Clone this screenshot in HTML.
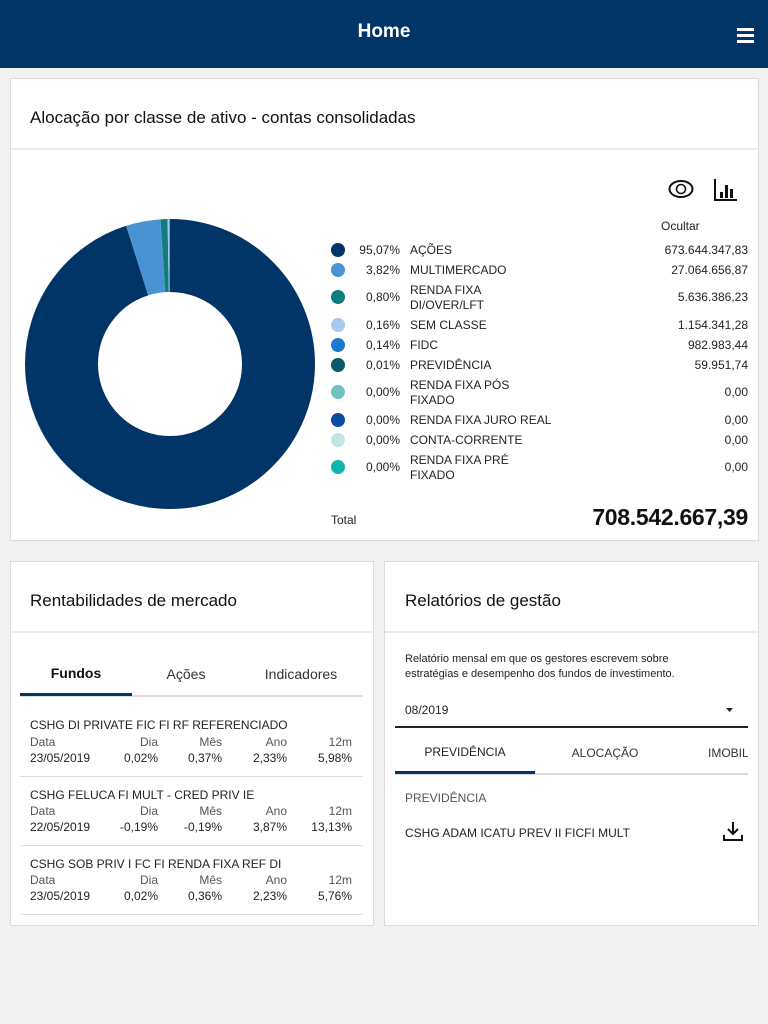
<!DOCTYPE html>
<html><head><meta charset="utf-8"><style>
*{margin:0;padding:0;box-sizing:border-box}
body{width:768px;height:1024px;background:#f1f1f1;font-family:"Liberation Sans",Arial,sans-serif;color:#222;position:relative;overflow:hidden}
.a{position:absolute;white-space:nowrap}
.hdr{left:0;top:0;width:768px;height:68px;background:#023567}
.card{position:absolute;background:#fff;border:1px solid #dcdcdc}
.t{font-size:17px;color:#111}
.sm{font-size:12px;color:#222}
.r{text-align:right}
.dot{position:absolute;width:14px;height:14px;border-radius:50%}
.g{color:#555}
</style></head><body>
<div class="a hdr"></div>
<div class="a" style="left:0;width:768px;top:21px;text-align:center;color:#fff;font-size:19px;font-weight:bold">Home</div>
<div class="a" style="left:737px;top:28px;width:17px;height:3px;background:#fff"></div>
<div class="a" style="left:737px;top:34px;width:17px;height:3px;background:#fff"></div>
<div class="a" style="left:737px;top:40px;width:17px;height:3px;background:#fff"></div>

<div class="card" style="left:10px;top:78px;width:749px;height:463px"></div>
<div class="a t" style="left:30px;top:108px">Alocação por classe de ativo - contas consolidadas</div>
<div class="a" style="left:11px;top:148px;width:747px;height:2px;background:#ececec"></div>

<svg class="a" style="left:0;top:0" width="768" height="560">
<g transform="rotate(-90 170 364)" fill="none" stroke-width="73">
<circle cx="170" cy="364" r="108.5" stroke="#023567" stroke-dasharray="648.1 681.7"/>
<circle cx="170" cy="364" r="108.5" stroke="#4a93d2" stroke-dasharray="0 648.1 26 10"/>
<circle cx="170" cy="364" r="108.5" stroke="#0d7d7d" stroke-dasharray="0 674.2 5.4 10"/>
<circle cx="170" cy="364" r="108.5" stroke="#a9c8ec" stroke-dasharray="0 679.6 1.2 10"/>
<circle cx="170" cy="364" r="108.5" stroke="#1d78cf" stroke-dasharray="0 680.8 0.9 10"/>
</g>
<ellipse cx="681" cy="189" rx="11.5" ry="8" fill="none" stroke="#111" stroke-width="2"/>
<circle cx="681" cy="189" r="4.5" fill="none" stroke="#111" stroke-width="1.6"/>
<path d="M715 179V200H737" fill="none" stroke="#111" stroke-width="2"/>
<rect x="720" y="192" width="3" height="6" fill="#111"/>
<rect x="725" y="185" width="3" height="13" fill="#111"/>
<rect x="730" y="189" width="3" height="9" fill="#111"/>
</svg>

<div class="a sm" style="left:661px;top:219px">Ocultar</div>

<div class="dot" style="left:331px;top:243px;background:#023567"></div>
<div class="dot" style="left:331px;top:263px;background:#4a93d2"></div>
<div class="dot" style="left:331px;top:290px;background:#0d7d7d"></div>
<div class="dot" style="left:331px;top:318px;background:#a9c8ec"></div>
<div class="dot" style="left:331px;top:338px;background:#1d78cf"></div>
<div class="dot" style="left:331px;top:358px;background:#0a5a6a"></div>
<div class="dot" style="left:331px;top:385px;background:#6cc3c0"></div>
<div class="dot" style="left:331px;top:413px;background:#0c4c9c"></div>
<div class="dot" style="left:331px;top:433px;background:#c3e6e4"></div>
<div class="dot" style="left:331px;top:460px;background:#11b4ae"></div>

<div class="a sm r" style="left:340px;width:60px;top:243px">95,07%</div>
<div class="a sm r" style="left:340px;width:60px;top:263px">3,82%</div>
<div class="a sm r" style="left:340px;width:60px;top:290px">0,80%</div>
<div class="a sm r" style="left:340px;width:60px;top:318px">0,16%</div>
<div class="a sm r" style="left:340px;width:60px;top:338px">0,14%</div>
<div class="a sm r" style="left:340px;width:60px;top:358px">0,01%</div>
<div class="a sm r" style="left:340px;width:60px;top:385px">0,00%</div>
<div class="a sm r" style="left:340px;width:60px;top:413px">0,00%</div>
<div class="a sm r" style="left:340px;width:60px;top:433px">0,00%</div>
<div class="a sm r" style="left:340px;width:60px;top:460px">0,00%</div>

<div class="a sm" style="left:410px;top:243px">AÇÕES</div>
<div class="a sm" style="left:410px;top:263px">MULTIMERCADO</div>
<div class="a sm" style="left:410px;top:283px;line-height:15px">RENDA FIXA<br>DI/OVER/LFT</div>
<div class="a sm" style="left:410px;top:318px">SEM CLASSE</div>
<div class="a sm" style="left:410px;top:338px">FIDC</div>
<div class="a sm" style="left:410px;top:358px">PREVIDÊNCIA</div>
<div class="a sm" style="left:410px;top:378px;line-height:15px">RENDA FIXA PÓS<br>FIXADO</div>
<div class="a sm" style="left:410px;top:413px">RENDA FIXA JURO REAL</div>
<div class="a sm" style="left:410px;top:433px">CONTA-CORRENTE</div>
<div class="a sm" style="left:410px;top:453px;line-height:15px">RENDA FIXA PRÉ<br>FIXADO</div>

<div class="a sm r" style="left:600px;width:148px;top:243px">673.644.347,83</div>
<div class="a sm r" style="left:600px;width:148px;top:263px">27.064.656,87</div>
<div class="a sm r" style="left:600px;width:148px;top:290px">5.636.386,23</div>
<div class="a sm r" style="left:600px;width:148px;top:318px">1.154.341,28</div>
<div class="a sm r" style="left:600px;width:148px;top:338px">982.983,44</div>
<div class="a sm r" style="left:600px;width:148px;top:358px">59.951,74</div>
<div class="a sm r" style="left:600px;width:148px;top:385px">0,00</div>
<div class="a sm r" style="left:600px;width:148px;top:413px">0,00</div>
<div class="a sm r" style="left:600px;width:148px;top:433px">0,00</div>
<div class="a sm r" style="left:600px;width:148px;top:460px">0,00</div>

<div class="a sm" style="left:331px;top:513px">Total</div>
<div class="a r" style="left:500px;width:248px;top:504px;font-size:23px;color:#111;font-weight:bold;letter-spacing:-0.3px">708.542.667,39</div>

<!-- card 2 -->
<div class="card" style="left:10px;top:561px;width:364px;height:365px"></div>
<div class="a t" style="left:30px;top:591px">Rentabilidades de mercado</div>
<div class="a" style="left:11px;top:631px;width:362px;height:2px;background:#ececec"></div>
<div class="a" style="left:20px;width:112px;top:665px;text-align:center;font-size:14px;font-weight:bold;color:#111">Fundos</div>
<div class="a" style="left:131px;width:110px;top:666px;text-align:center;font-size:14px;color:#333">Ações</div>
<div class="a" style="left:241px;width:120px;top:666px;text-align:center;font-size:14px;color:#333">Indicadores</div>
<div class="a" style="left:20px;top:695px;width:343px;height:2px;background:#ddd"></div>
<div class="a" style="left:20px;top:693px;width:112px;height:3px;background:#023567"></div>

<div class="a sm" style="left:30px;top:718px">CSHG DI PRIVATE FIC FI RF REFERENCIADO</div>
<div class="a sm g" style="left:30px;top:735px">Data</div>
<div class="a sm g r" style="left:100px;width:58px;top:735px">Dia</div>
<div class="a sm g r" style="left:160px;width:62px;top:735px">Mês</div>
<div class="a sm g r" style="left:225px;width:62px;top:735px">Ano</div>
<div class="a sm g r" style="left:290px;width:62px;top:735px">12m</div>
<div class="a sm" style="left:30px;top:751px">23/05/2019</div>
<div class="a sm r" style="left:100px;width:58px;top:751px">0,02%</div>
<div class="a sm r" style="left:160px;width:62px;top:751px">0,37%</div>
<div class="a sm r" style="left:225px;width:62px;top:751px">2,33%</div>
<div class="a sm r" style="left:290px;width:62px;top:751px">5,98%</div>
<div class="a" style="left:20px;top:776px;width:343px;height:1px;background:#ddd"></div>

<div class="a sm" style="left:30px;top:788px">CSHG FELUCA FI MULT - CRED PRIV IE</div>
<div class="a sm g" style="left:30px;top:804px">Data</div>
<div class="a sm g r" style="left:100px;width:58px;top:804px">Dia</div>
<div class="a sm g r" style="left:160px;width:62px;top:804px">Mês</div>
<div class="a sm g r" style="left:225px;width:62px;top:804px">Ano</div>
<div class="a sm g r" style="left:290px;width:62px;top:804px">12m</div>
<div class="a sm" style="left:30px;top:820px">22/05/2019</div>
<div class="a sm r" style="left:100px;width:58px;top:820px">-0,19%</div>
<div class="a sm r" style="left:160px;width:62px;top:820px">-0,19%</div>
<div class="a sm r" style="left:225px;width:62px;top:820px">3,87%</div>
<div class="a sm r" style="left:290px;width:62px;top:820px">13,13%</div>
<div class="a" style="left:20px;top:845px;width:343px;height:1px;background:#ddd"></div>

<div class="a sm" style="left:30px;top:857px">CSHG SOB PRIV I FC FI RENDA FIXA REF DI</div>
<div class="a sm g" style="left:30px;top:873px">Data</div>
<div class="a sm g r" style="left:100px;width:58px;top:873px">Dia</div>
<div class="a sm g r" style="left:160px;width:62px;top:873px">Mês</div>
<div class="a sm g r" style="left:225px;width:62px;top:873px">Ano</div>
<div class="a sm g r" style="left:290px;width:62px;top:873px">12m</div>
<div class="a sm" style="left:30px;top:889px">23/05/2019</div>
<div class="a sm r" style="left:100px;width:58px;top:889px">0,02%</div>
<div class="a sm r" style="left:160px;width:62px;top:889px">0,36%</div>
<div class="a sm r" style="left:225px;width:62px;top:889px">2,23%</div>
<div class="a sm r" style="left:290px;width:62px;top:889px">5,76%</div>
<div class="a" style="left:20px;top:914px;width:343px;height:1px;background:#ddd"></div>

<!-- card 3 -->
<div class="card" style="left:384px;top:561px;width:375px;height:365px"></div>
<div class="a" style="left:385px;top:631px;width:373px;height:2px;background:#ececec"></div>
<div class="a t" style="left:405px;top:591px">Relatórios de gestão</div>
<div class="a" style="left:405px;top:652px;font-size:11px;line-height:15px;color:#222">Relatório mensal em que os gestores escrevem sobre<br>estratégias e desempenho dos fundos de investimento.</div>
<div class="a sm" style="left:405px;top:703px">08/2019</div>
<svg class="a" style="left:724px;top:706px" width="12" height="8"><path d="M2 2h7L5.5 6z" fill="#222"/></svg>
<div class="a" style="left:395px;top:726px;width:353px;height:2px;background:#222"></div>
<div class="a" style="left:395px;width:140px;top:745px;text-align:center;font-size:12px;color:#222">PREVIDÊNCIA</div>
<div class="a" style="left:545px;width:120px;top:746px;text-align:center;font-size:12px;color:#333">ALOCAÇÃO</div>
<div class="a" style="left:708px;top:746px;width:40px;overflow:hidden;font-size:12px;color:#333">IMOBILIÁRIO</div>
<div class="a" style="left:395px;top:773px;width:353px;height:2px;background:#ddd"></div>
<div class="a" style="left:395px;top:771px;width:140px;height:3px;background:#023567"></div>
<div class="a sm g" style="left:405px;top:791px">PREVIDÊNCIA</div>
<div class="a sm" style="left:405px;top:826px">CSHG ADAM ICATU PREV II FICFI MULT</div>
<svg class="a" style="left:722px;top:820px" width="22" height="22"><path d="M11 2v12M6 9l5 5 5-5M2 15v5h18v-5" fill="none" stroke="#111" stroke-width="2"/></svg>
</body></html>
